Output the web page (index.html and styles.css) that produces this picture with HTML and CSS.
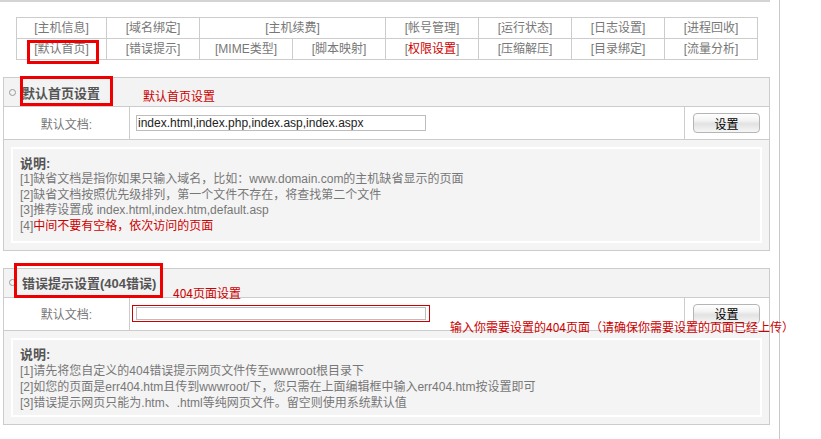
FILE: index.html
```html
<!DOCTYPE html>
<html lang="zh-CN">
<head>
<meta charset="utf-8">
<title>默认首页设置</title>
<link rel="stylesheet" href="styles.css">
</head>
<body>
<div class="page">
  <div class="main">
    <div class="topline"></div>
    <table class="nav">
      <tr>
        <td>[主机信息]</td>
        <td>[域名绑定]</td>
        <td colspan="2">[主机续费]</td>
        <td>[帐号管理]</td>
        <td>[运行状态]</td>
        <td>[日志设置]</td>
        <td>[进程回收]</td>
      </tr>
      <tr>
        <td>[默认首页]</td>
        <td>[错误提示]</td>
        <td>[MIME类型]</td>
        <td>[脚本映射]</td>
        <td>[<span class="red">权限设置</span>]</td>
        <td>[压缩解压]</td>
        <td>[目录绑定]</td>
        <td>[流量分析]</td>
      </tr>
    </table>

    <div class="section s1">
      <div class="sec-head"><span class="dot"></span>默认首页设置</div>
      <div class="sec-row">
        <div class="lbl">默认文档:</div>
        <div class="fld"><div class="input">index.html,index.php,index.asp,index.aspx</div></div>
        <div class="act"><div class="btn">设置</div></div>
      </div>
      <div class="desc">
        <div class="desc-in">
          <div class="desc-title">说明:</div>
          <div>[1]缺省文档是指你如果只输入域名，比如：www.domain.com的主机缺省显示的页面</div>
          <div>[2]缺省文档按照优先级排列，第一个文件不存在，将查找第二个文件</div>
          <div>[3]推荐设置成 index.html,index.htm,default.asp</div>
          <div>[4]<span class="red">中间不要有空格，依次访问的页面</span></div>
        </div>
      </div>
    </div>

    <div class="section s2">
      <div class="sec-head"><span class="dot"></span>错误提示设置(404错误)</div>
      <div class="sec-row">
        <div class="lbl">默认文档:</div>
        <div class="fld"><div class="input short"></div></div>
        <div class="act"><div class="btn">设置</div></div>
      </div>
      <div class="desc">
        <div class="desc-in d2">
          <div class="desc-title">说明:</div>
          <div>[1]请先将您自定义的404错误提示网页文件传至wwwroot根目录下</div>
          <div>[2]如您的页面是err404.htm且传到wwwroot/下，您只需在上面编辑框中输入err404.htm按设置即可</div>
          <div>[3]错误提示网页只能为.htm、.html等纯网页文件。留空则使用系统默认值</div>
        </div>
      </div>
    </div>
  </div>

  <div class="mark m-tab"></div>
  <div class="mark m-h1"></div>
  <div class="mark m-h2"></div>
  <div class="mark-thin m-in2"></div>
  <div class="note n1">默认首页设置</div>
  <div class="note n2">404页面设置</div>
  <div class="note n3">输入你需要设置的404页面（请确保你需要设置的页面已经上传）</div>
</div>
</body>
</html>
```
FILE: styles.css
```css
html, body {
  margin: 0;
  padding: 0;
  background: #fff;
}
body {
  font-family: "Liberation Sans", "Noto Sans CJK SC", sans-serif;
  font-size: 12px;
  color: #777;
}
.page {
  position: relative;
  width: 821px;
  height: 439px;
  overflow: hidden;
}
.main {
  height: 439px;
  border-right: 1px solid #c8c8c8;
  box-sizing: border-box;
  width: 780px;
}
.topline {
  width: 770px;
  height: 0;
  border-top: 2px solid #d4d4d4;
}
.nav {
  margin: 15px 0 0 16px;
  border-collapse: collapse;
  width: 742px;
  table-layout: fixed;
}
.nav td {
  border: 1px solid #ccc;
  height: 20px;
  padding: 0;
  text-align: center;
  color: #777;
  white-space: nowrap;
  line-height: 20px;
}
.nav tr:first-child td:nth-child(1) { width: 89px; }
.red { color: #c00; }

.section {
  margin: 17px 0 0 3px;
  width: 767px;
  box-sizing: border-box;
  border: 1px solid #ccc;
  background: #f4f4f4;
}
.sec-head {
  height: 28px;
  border-bottom: 1px solid #ccc;
  background: #f3f3f3;
  display: flex;
  align-items: center;
  padding-left: 5px;
  font-size: 13px;
  font-weight: bold;
  color: #555;
}
.dot {
  width: 5px;
  height: 5px;
  border: 1px solid #999;
  border-radius: 50%;
  margin-right: 6px;
  box-sizing: content-box;
}
.sec-row {
  display: flex;
  height: 32px;
  border-bottom: 1px solid #ccc;
  background: #fff;
}
.lbl {
  width: 125px;
  border-right: 1px solid #ccc;
  display: flex;
  align-items: center;
  justify-content: center;
  color: #777;
}
.fld {
  width: 555px;
  border-right: 1px solid #ccc;
  display: flex;
  align-items: center;
  padding-left: 6px;
  box-sizing: border-box;
}
.input {
  width: 290px;
  height: 16px;
  box-sizing: border-box;
  border: 1px solid #bdbdbd;
  font-size: 12px;
  color: #222;
  line-height: 14px;
  padding-left: 1px;
  white-space: nowrap;
  overflow: hidden;
}
.input.short {
  height: 13px;
}
.act {
  flex: 1;
  display: flex;
  align-items: center;
  padding-left: 8px;
}
.btn {
  width: 67px;
  height: 20px;
  box-sizing: border-box;
  border: 1px solid #b5b5b5;
  border-radius: 4px;
  background: linear-gradient(#ffffff 0%, #f4f4f4 35%, #e2e2e2 55%, #f6f6f6 100%);
  color: #000;
  font-size: 12px;
  display: flex;
  align-items: center;
  justify-content: center;
  font-family: "Noto Sans CJK SC", sans-serif;
}
.desc {
  padding: 7px;
}
.desc-in {
  border: 2px solid #fff;
  background: #f4f4f4;
  padding: 7px 0 6px 7px;
  line-height: 15.8px;
  color: #777;
  white-space: nowrap;
}
.desc-in.d2 {
  padding-bottom: 4px;
  line-height: 16px;
}
.desc-title {
  font-weight: bold;
  font-size: 13px;
  color: #555;
}

.mark {
  position: absolute;
  border: 3px solid #e00;
  box-sizing: border-box;
}
.m-tab { left: 27px; top: 40px; width: 72px; height: 24px; }
.m-h1 { left: 20px; top: 76px; width: 93px; height: 30px; }
.m-h2 { left: 14px; top: 263px; width: 149px; height: 35px; }
.mark-thin {
  position: absolute;
  border: 1px solid #c00;
  box-sizing: border-box;
}
.m-in2 { left: 132px; top: 305px; width: 298px; height: 17px; }
.note {
  position: absolute;
  color: #c00;
  font-size: 12px;
  line-height: 14px;
  white-space: nowrap;
  font-family: "Noto Sans CJK SC", sans-serif;
}
.n1 { left: 143px; top: 89px; }
.n2 { left: 173px; top: 286px; }
.n3 { left: 450px; top: 320px; }
```
